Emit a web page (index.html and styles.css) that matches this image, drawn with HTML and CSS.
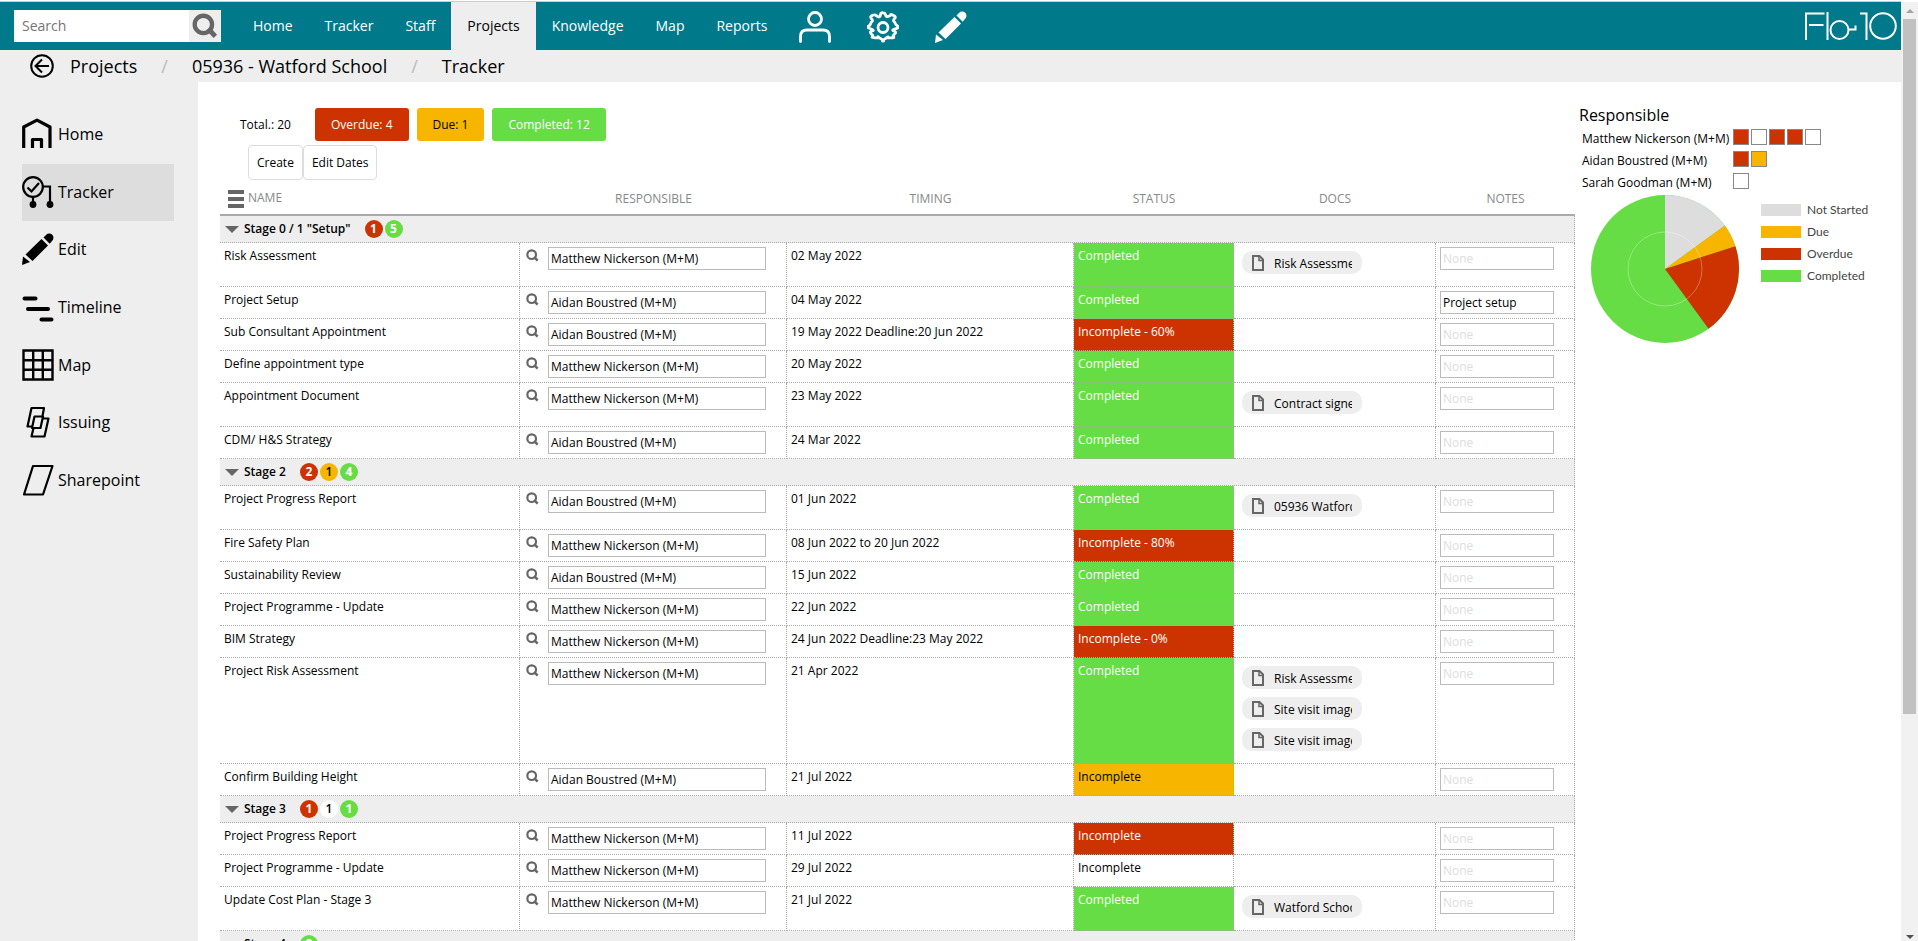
FILE: index.html
```html
<!DOCTYPE html>
<html lang="en">
<head>
<meta charset="utf-8">
<title>Tracker - 05936 - Watford School</title>
<link rel="stylesheet" href="styles.css">
</head>
<body>
<svg class="sprite" aria-hidden="true">
  <symbol id="i-search" viewBox="0 0 24 24"><circle cx="10.5" cy="10.5" r="8" fill="none" stroke="currentColor" stroke-width="4"/><path d="M15 14.5l6.5 7" fill="none" stroke="currentColor" stroke-width="4.5"/></symbol>
  <symbol id="i-doc" viewBox="0 0 12 16"><path d="M1 1h6.5L11 4.500V15H1z" fill="none" stroke="currentColor" stroke-width="2"/><path d="M7 1v4.500h4.500" fill="none" stroke="currentColor" stroke-width="1.500"/></symbol>
  <symbol id="i-pencil" viewBox="0 0 32 32"><path fill="currentColor" d="M0 32l1-8.500 7 5.500zM3.500 21.500L19.500 6l6.500 6.500L10.500 28zM21.500 4.500l2.700-2.700a4.200 4.200 0 0 1 6 6L27.700 10.700z"/></symbol>
</svg>
<div class="window">
  <div class="page">
    <header class="topbar">
      <form class="search" role="search">
        <input type="search" placeholder="Search" aria-label="Search">
        <button type="button" aria-label="Run search"><svg><use href="#i-search"/></svg></button>
      </form>
      <nav class="menu" aria-label="Main">
        <a href="#">Home</a><a href="#">Tracker</a><a href="#">Staff</a><a href="#" class="current">Projects</a><a href="#">Knowledge</a><a href="#">Map</a><a href="#">Reports</a>
      </nav>
      <div class="tools">
        <a href="#" aria-label="Account"><svg viewBox="0 0 32 32" fill="none" stroke="currentColor" stroke-width="2.800"><circle cx="16" cy="8" r="6.500"/><path d="M1.500 30.500v-5q0-6.500 6.500-6.500h16q6.500 0 6.500 6.500v5" stroke-linecap="round"/></svg></a>
        <a href="#" aria-label="Settings"><svg viewBox="0 0 32 32" fill="none" stroke="currentColor" stroke-width="2.800" stroke-linejoin="round"><circle cx="16" cy="16.500" r="5"/><path d="M16 1.800q2.200 0 2.600 2.200t2.600 1.400 2.400-1.600 3 .6 1 3.200-.6 3 1.400 2.200 2.300 2.400-2.300 2.600-1.400 2.200.6 3-1 3-3.200.9-2.800-.9-2.300 1.600-2.300 2.600-2.300-2.600-2.300-1.600-2.800.9-3.200-.9-1-3 .6-3-1.400-2.200-2.300-2.600 2.300-2.400 1.400-2.200-.6-3 1-3.200 3-.6 2.400 1.600 2.600-1.400T16 1.800z"/></svg></a>
        <a href="#" aria-label="Edit"><svg><use href="#i-pencil"/></svg></a>
      </div>
      <svg class="logo" viewBox="0 0 92 28" role="img" aria-label="Flo-10" fill="none" stroke="currentColor" stroke-width="2"><path d="M1 28V1.500h18.500M4 13h14.500M22.500 0v28M44 17.500h6.500v-4M55 1.500h6.500V28"/><circle cx="34.500" cy="18" r="9"/><circle cx="78" cy="14" r="12.800"/></svg>
    </header>

    <nav class="crumbs" aria-label="Breadcrumb">
      <a href="#" class="back" aria-label="Back"><svg viewBox="0 0 24 24" fill="none" stroke="currentColor" stroke-width="2"><circle cx="12" cy="12" r="10.800"/><path d="M19 12H6M12 5.500L5.500 12l6.500 6.500"/></svg></a>
      <a href="#">Projects</a><span class="sep">/</span><a href="#">05936 - Watford School</a><span class="sep">/</span><a href="#">Tracker</a>
    </nav>

    <div class="body">
      <nav class="sidebar" aria-label="Project">
        <a href="#"><svg viewBox="0 0 32 32" fill="none" stroke="currentColor" stroke-width="3.200"><path d="M1.700 30V9L15 2.200 28 9v21" stroke-linejoin="round"/><path d="M10.500 30v-8.500h9V30" stroke-linejoin="round"/></svg>Home</a>
        <a href="#" class="current"><svg viewBox="0 0 32 32" fill="none" stroke="currentColor" stroke-width="2.200"><circle cx="11" cy="11" r="9.800"/><path d="M5.500 11.500l4 4 7.500-8.500M11 21v7M21 10.500h7V28"/><circle cx="11" cy="28.500" r="3.400" fill="currentColor" stroke="none"/><circle cx="28" cy="28.500" r="3.400" fill="currentColor" stroke="none"/></svg>Tracker</a>
        <a href="#"><svg><use href="#i-pencil"/></svg>Edit</a>
        <a href="#"><svg viewBox="0 0 32 32" fill="none" stroke="currentColor" stroke-width="4" stroke-linecap="round"><path d="M2.500 7.500h11M6 18h20M19.500 28.500h10"/></svg>Timeline</a>
        <a href="#"><svg viewBox="0 0 32 32" fill="none" stroke="currentColor" stroke-width="2.400"><path d="M1.500 1.500h29v29h-29zM11.200 1.500v29M20.800 1.500v29M1.500 11.200h29M1.500 20.800h29"/></svg>Map</a>
        <a href="#"><svg viewBox="0 0 32 32" fill="none" stroke="currentColor" stroke-width="2.200" stroke-linejoin="round"><path d="M10 20.500H5.500L9.500 2H22l-1.500 8M12.500 10.500h8.500l-2.500 11.500h-8.500zM21 12.500h5.500L22.500 30.500H9.500L11.500 22"/></svg>Issuing</a>
        <a href="#"><svg viewBox="0 0 32 32" fill="none" stroke="currentColor" stroke-width="2.200" stroke-linejoin="round"><path d="M11 2h19.500L21 30.500H2z"/></svg>Sharepoint</a>
      </nav>

      <main class="content">
        <section class="tracker">
          <div class="summary">
            <span class="total">Total.: 20</span>
            <button type="button" class="red">Overdue: 4</button>
            <button type="button" class="amber">Due: 1</button>
            <button type="button" class="green">Completed: 12</button>
          </div>
          <div class="actions">
            <button type="button">Create</button><button type="button">Edit Dates</button>
          </div>

          <table>
            <colgroup><col><col class="c-resp"><col class="c-time"><col class="c-status"><col class="c-docs"><col class="c-notes"></colgroup>
            <thead>
              <tr><th class="name"><button type="button" aria-label="Table options"><svg viewBox="0 0 16 18" stroke="currentColor" stroke-width="4"><path d="M0 2h16M0 9h16M0 16h16"/></svg></button>NAME</th><th>RESPONSIBLE</th><th>TIMING</th><th>STATUS</th><th>DOCS</th><th>NOTES</th></tr>
            </thead>
            <tbody>
              <tr class="stage"><td colspan="6"><div><button type="button"><i class="caret"></i>Stage 0 / 1 "Setup"</button><b class="red">1</b><b class="green">5</b></div></td></tr>
              <tr><td>Risk Assessment</td><td><div class="who"><button type="button" aria-label="Find person"><svg><use href="#i-search"/></svg></button><input type="text" aria-label="Responsible" value="Matthew Nickerson (M+M)"></div></td><td>02 May 2022</td><td class="green">Completed</td><td class="docs"><a href="#"><svg><use href="#i-doc"/></svg><span>Risk Assessment</span></a></td><td><input type="text" aria-label="Notes" placeholder="None"></td></tr>
              <tr><td>Project Setup</td><td><div class="who"><button type="button" aria-label="Find person"><svg><use href="#i-search"/></svg></button><input type="text" aria-label="Responsible" value="Aidan Boustred (M+M)"></div></td><td>04 May 2022</td><td class="green">Completed</td><td></td><td><input type="text" aria-label="Notes" placeholder="None" value="Project setup"></td></tr>
              <tr><td>Sub Consultant Appointment</td><td><div class="who"><button type="button" aria-label="Find person"><svg><use href="#i-search"/></svg></button><input type="text" aria-label="Responsible" value="Aidan Boustred (M+M)"></div></td><td>19 May 2022 Deadline:20 Jun 2022</td><td class="red">Incomplete - 60%</td><td></td><td><input type="text" aria-label="Notes" placeholder="None"></td></tr>
              <tr><td>Define appointment type</td><td><div class="who"><button type="button" aria-label="Find person"><svg><use href="#i-search"/></svg></button><input type="text" aria-label="Responsible" value="Matthew Nickerson (M+M)"></div></td><td>20 May 2022</td><td class="green">Completed</td><td></td><td><input type="text" aria-label="Notes" placeholder="None"></td></tr>
              <tr><td>Appointment Document</td><td><div class="who"><button type="button" aria-label="Find person"><svg><use href="#i-search"/></svg></button><input type="text" aria-label="Responsible" value="Matthew Nickerson (M+M)"></div></td><td>23 May 2022</td><td class="green">Completed</td><td class="docs"><a href="#"><svg><use href="#i-doc"/></svg><span>Contract signed</span></a></td><td><input type="text" aria-label="Notes" placeholder="None"></td></tr>
              <tr><td>CDM/ H&amp;S Strategy</td><td><div class="who"><button type="button" aria-label="Find person"><svg><use href="#i-search"/></svg></button><input type="text" aria-label="Responsible" value="Aidan Boustred (M+M)"></div></td><td>24 Mar 2022</td><td class="green">Completed</td><td></td><td><input type="text" aria-label="Notes" placeholder="None"></td></tr>
            </tbody>
            <tbody>
              <tr class="stage"><td colspan="6"><div><button type="button"><i class="caret"></i>Stage 2</button><b class="red">2</b><b class="amber">1</b><b class="green">4</b></div></td></tr>
              <tr><td>Project Progress Report</td><td><div class="who"><button type="button" aria-label="Find person"><svg><use href="#i-search"/></svg></button><input type="text" aria-label="Responsible" value="Aidan Boustred (M+M)"></div></td><td>01 Jun 2022</td><td class="green">Completed</td><td class="docs"><a href="#"><svg><use href="#i-doc"/></svg><span>05936 Watford</span></a></td><td><input type="text" aria-label="Notes" placeholder="None"></td></tr>
              <tr><td>Fire Safety Plan</td><td><div class="who"><button type="button" aria-label="Find person"><svg><use href="#i-search"/></svg></button><input type="text" aria-label="Responsible" value="Matthew Nickerson (M+M)"></div></td><td>08 Jun 2022 to 20 Jun 2022</td><td class="red">Incomplete - 80%</td><td></td><td><input type="text" aria-label="Notes" placeholder="None"></td></tr>
              <tr><td>Sustainability Review</td><td><div class="who"><button type="button" aria-label="Find person"><svg><use href="#i-search"/></svg></button><input type="text" aria-label="Responsible" value="Aidan Boustred (M+M)"></div></td><td>15 Jun 2022</td><td class="green">Completed</td><td></td><td><input type="text" aria-label="Notes" placeholder="None"></td></tr>
              <tr><td>Project Programme - Update</td><td><div class="who"><button type="button" aria-label="Find person"><svg><use href="#i-search"/></svg></button><input type="text" aria-label="Responsible" value="Matthew Nickerson (M+M)"></div></td><td>22 Jun 2022</td><td class="green">Completed</td><td></td><td><input type="text" aria-label="Notes" placeholder="None"></td></tr>
              <tr><td>BIM Strategy</td><td><div class="who"><button type="button" aria-label="Find person"><svg><use href="#i-search"/></svg></button><input type="text" aria-label="Responsible" value="Matthew Nickerson (M+M)"></div></td><td>24 Jun 2022 Deadline:23 May 2022</td><td class="red">Incomplete - 0%</td><td></td><td><input type="text" aria-label="Notes" placeholder="None"></td></tr>
              <tr><td>Project Risk Assessment</td><td><div class="who"><button type="button" aria-label="Find person"><svg><use href="#i-search"/></svg></button><input type="text" aria-label="Responsible" value="Matthew Nickerson (M+M)"></div></td><td>21 Apr 2022</td><td class="green">Completed</td><td class="docs"><a href="#"><svg><use href="#i-doc"/></svg><span>Risk Assessment</span></a><a href="#"><svg><use href="#i-doc"/></svg><span>Site visit image</span></a><a href="#"><svg><use href="#i-doc"/></svg><span>Site visit image</span></a></td><td><input type="text" aria-label="Notes" placeholder="None"></td></tr>
              <tr><td>Confirm Building Height</td><td><div class="who"><button type="button" aria-label="Find person"><svg><use href="#i-search"/></svg></button><input type="text" aria-label="Responsible" value="Aidan Boustred (M+M)"></div></td><td>21 Jul 2022</td><td class="amber">Incomplete</td><td></td><td><input type="text" aria-label="Notes" placeholder="None"></td></tr>
            </tbody>
            <tbody>
              <tr class="stage"><td colspan="6"><div><button type="button"><i class="caret"></i>Stage 3</button><b class="red">1</b><b class="plain">1</b><b class="green">1</b></div></td></tr>
              <tr><td>Project Progress Report</td><td><div class="who"><button type="button" aria-label="Find person"><svg><use href="#i-search"/></svg></button><input type="text" aria-label="Responsible" value="Matthew Nickerson (M+M)"></div></td><td>11 Jul 2022</td><td class="red">Incomplete</td><td></td><td><input type="text" aria-label="Notes" placeholder="None"></td></tr>
              <tr><td>Project Programme - Update</td><td><div class="who"><button type="button" aria-label="Find person"><svg><use href="#i-search"/></svg></button><input type="text" aria-label="Responsible" value="Matthew Nickerson (M+M)"></div></td><td>29 Jul 2022</td><td>Incomplete</td><td></td><td><input type="text" aria-label="Notes" placeholder="None"></td></tr>
              <tr><td>Update Cost Plan - Stage 3</td><td><div class="who"><button type="button" aria-label="Find person"><svg><use href="#i-search"/></svg></button><input type="text" aria-label="Responsible" value="Matthew Nickerson (M+M)"></div></td><td>21 Jul 2022</td><td class="green">Completed</td><td class="docs"><a href="#"><svg><use href="#i-doc"/></svg><span>Watford School</span></a></td><td><input type="text" aria-label="Notes" placeholder="None"></td></tr>
            </tbody>
            <tbody>
              <tr class="stage"><td colspan="6"><div><button type="button"><i class="caret"></i>Stage 4</button><b class="green">2</b></div></td></tr>
            </tbody>
          </table>
        </section>

        <aside class="side">
          <h2>Responsible</h2>
          <dl class="people">
            <dt>Matthew Nickerson (M+M)</dt><dd><i class="red"></i><i></i><i class="red"></i><i class="red"></i><i></i></dd>
            <dt>Aidan Boustred (M+M)</dt><dd><i class="red"></i><i class="amber"></i></dd>
            <dt>Sarah Goodman (M+M)</dt><dd><i></i></dd>
          </dl>
          <div class="chart">
            <svg viewBox="-74 -74 148 148" role="img" aria-label="Task status breakdown">
              <circle r="74" fill="#66dd44"/>
              <path d="M0 0V-74A74 74 0 0 1 59.870 -43.500z" fill="#dddddd"/>
              <path d="M0 0L59.870 -43.500A74 74 0 0 1 70.380 -22.870z" fill="#f7b500"/>
              <path d="M0 0L70.380 -22.870A74 74 0 0 1 43.500 59.870z" fill="#cc3300"/>
              <circle r="37" fill="none" stroke="#ffffff" stroke-opacity="0.300"/>
            </svg>
            <ul class="legend">
              <li><i class="grey"></i>Not Started</li>
              <li><i class="amber"></i>Due</li>
              <li><i class="red"></i>Overdue</li>
              <li><i class="green"></i>Completed</li>
            </ul>
          </div>
        </aside>
      </main>
    </div>
  </div>
  <div class="scrollbar" aria-hidden="true"><i class="up"></i><i class="thumb"></i><i class="rest"></i><i class="down"></i></div>
</div>
</body>
</html>
```
FILE: styles.css
```css
* { box-sizing: border-box; }

body {
  margin: 0;
  font: 12px/16px "Open Sans", "Noto Sans", sans-serif;
  color: #000;
  background: #fff;
}

a { color: inherit; text-decoration: none; }
button, input { font: inherit; color: inherit; }
button { margin: 0; padding: 0; border: 0; background: none; cursor: pointer; }
i { font-style: normal; }
.sprite { display: none; }

.red { background: #cc3300; color: #fff; }
.amber { background: #f7b500; color: #000; }
.green { background: #66dd44; color: #fff; }
.grey { background: #ddd; }
.plain { background: #fff; color: #000; }

.window {
  display: flex;
  height: 100vh;
  overflow: hidden;
  padding-top: 1px;
}

.page {
  flex: 1;
  min-width: 0;
  overflow: hidden;
  border-top: 1px solid #ccc;
  background: #eee;
}

/* Top bar */
.topbar {
  display: flex;
  align-items: center;
  height: 48px;
  padding: 0 4px 0 14px;
  background: #007a8a;
  color: #fff;
}

.search { display: flex; width: 207px; height: 32px; margin-right: 16px; }
.search input {
  flex: 1;
  min-width: 0;
  padding: 0 8px;
  border: 0;
  border-radius: 0;
  background: #fff;
  color: #000;
  font-size: 14px;
  appearance: none;
}
.search input::placeholder { color: #757575; }
.search button { display: grid; place-items: center; width: 32px; background: #eee; color: #666; }
.search svg { width: 26px; height: 26px; }

.menu { display: flex; align-self: stretch; font-size: 14px; }
.menu a { padding: 0 16px; line-height: 47px; }
.menu .current { background: #eee; color: #000; }

.tools { display: flex; gap: 36px; margin-left: 16px; padding-top: 2px; }
.tools svg { display: block; width: 32px; height: 32px; }
.logo { width: 92px; height: 28px; margin-left: auto; }

/* Breadcrumb */
.crumbs {
  display: flex;
  align-items: center;
  height: 32px;
  padding-left: 30px;
  font-size: 18px;
}
.crumbs .sep { padding: 0 24px; color: #bbb; }
.back { margin-right: 16px; }
.back svg { display: block; width: 24px; height: 24px; }

.body { display: flex; }

/* Project menu */
.sidebar {
  display: grid;
  grid-auto-rows: 1fr;
  flex: none;
  align-self: flex-start;
  width: 198px;
  min-height: 428px;
  padding: 24px 24px 0 22px;
  font-size: 16px;
}
.sidebar a { display: flex; align-items: center; gap: 4px; padding-bottom: 2px; }
.sidebar svg { width: 32px; height: 32px; }
.sidebar .current { background: #ddd; }

.content {
  display: flex;
  flex: 1;
  min-width: 0;
  padding: 24px 0 0 22px;
  background: #fff;
}

.tracker { flex: 1; min-width: 0; padding-top: 2px; }

.summary { display: flex; align-items: center; gap: 8px; padding-left: 20px; }
.summary .total { margin-right: 16px; }
.summary button { height: 33px; padding: 0 16px; border-radius: 3px; }

.actions { display: flex; padding: 4px 0 0 28px; }
.actions button { height: 35px; padding: 0 8px; border: 1px solid #ddd; border-radius: 4px; }

/* Task table */
table { width: 100%; border-spacing: 0; table-layout: fixed; }
.c-resp { width: 267px; }
.c-time { width: 287px; }
.c-status { width: 160px; }
.c-docs { width: 202px; }
.c-notes { width: 139px; }

th {
  height: 36px;
  padding: 4px 0 0;
  border-bottom: 2px solid #aaa;
  color: #888;
  font-weight: 400;
  text-align: center;
}
th.name { padding-left: 8px; text-align: left; }
th button { margin-right: 4px; color: #666; vertical-align: middle; }
th svg { display: block; width: 16px; height: 18px; }

td {
  height: 32px;
  padding: 4px;
  border-right: 1px dotted #aaa;
  border-bottom: 1px dotted #aaa;
  vertical-align: top;
  line-height: 18px;
}
td input {
  display: block;
  width: 114px;
  height: 23px;
  padding: 0 2px;
  border: 1px solid #bbb;
  border-radius: 0;
  background: #fff;
}
td input::placeholder { color: #ddd; }

.who { display: flex; align-items: flex-start; }
.who button { width: 24px; padding: 2px 0 0 2px; color: #666; }
.who svg { display: block; width: 13px; height: 13px; }
.who input { width: 218px; }

.stage td { height: 27px; padding-top: 0; padding-bottom: 0; background: #eee; }
.stage div { display: flex; align-items: center; gap: 2px; height: 26px; }
.stage button { display: flex; align-items: center; margin-right: 12px; font-weight: 600; }
.caret {
  margin: 0 5px 0 1px;
  border: 7px solid transparent;
  border-top-color: #666;
  border-bottom: 0;
}
.stage b { width: 18px; height: 18px; border-radius: 50%; text-align: center; font-weight: 700; }
.stage .amber, .stage .plain { font-weight: 600; }

td.docs { padding: 8px 8px 12px; }
.docs a {
  display: flex;
  align-items: center;
  width: 120px;
  height: 23px;
  padding: 0 10px;
  border-radius: 10px;
  background: #eee;
}
.docs a + a { margin-top: 8px; }
.docs svg { flex: none; width: 12px; height: 16px; margin-right: 10px; color: #666; }
.docs span { overflow: hidden; padding-top: 2px; white-space: nowrap; }

/* Right-hand panel */
.side { flex: none; width: 326px; padding-left: 4px; }
.side h2 { margin: 0; font-size: 16px; font-weight: 400; line-height: 18px; }
.people {
  display: grid;
  grid-template-columns: 151px 1fr;
  grid-auto-rows: 22px;
  align-items: center;
  margin: 2px 0 0 3px;
}
.people dt { padding-top: 3px; }
.people dd { display: flex; gap: 2px; margin: 0; }
.people i { width: 16px; height: 16px; border: 1px solid #888; }

.chart { display: flex; gap: 22px; padding: 3px 0 0 12px; }
.chart svg { width: 148px; height: 148px; }
.legend {
  margin: 4px 0 0;
  padding: 0;
  list-style: none;
  color: #444;
  font-family: Lato, sans-serif;
}
.legend li { display: flex; align-items: center; gap: 6px; height: 22px; }
.legend i { width: 40px; height: 12px; }

/* Window scroll bar */
.scrollbar {
  display: flex;
  flex-direction: column;
  align-items: center;
  width: 17px;
  margin-top: 1px;
  padding: 7px 0 2px;
  background: #f1f1f1;
}
.scrollbar .up { border: 4px solid transparent; border-top: 0; border-bottom-color: #a3a3a3; }
.scrollbar .thumb { flex: 695; width: 13px; margin-top: 6px; background: #c1c1c1; }
.scrollbar .rest { flex: 221; }
.scrollbar .down { border: 4px solid transparent; border-bottom: 0; border-top-color: #505050; }
```
